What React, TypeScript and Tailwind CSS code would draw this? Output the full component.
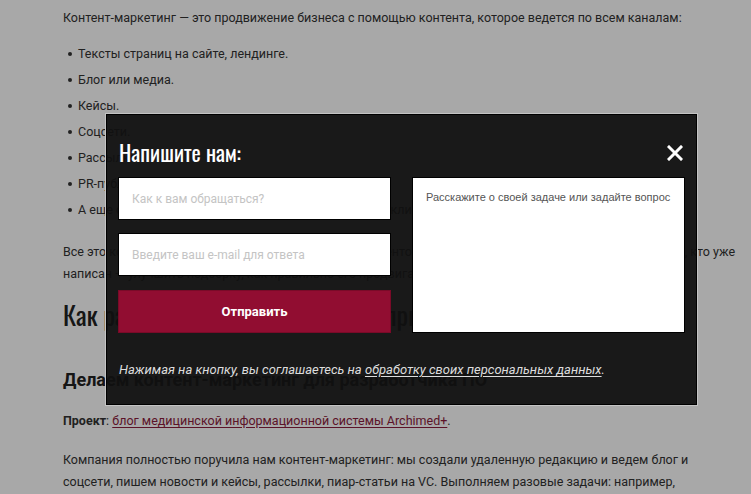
import { useState } from 'react'

const body = { fontFamily: 'Roboto, "Noto Sans", sans-serif' }
const condensed = { fontFamily: 'Oswald, "DejaVu Sans Condensed", "Liberation Sans Narrow", "Roboto Condensed", sans-serif', fontStretch: 'condensed' as const }

const items = [
  'Тексты страниц на сайте, лендинге.',
  'Блог или медиа.',
  'Кейсы.',
  'Соцсети.',
  'Рассылки.',
  'PR-публикации в СМИ.',
  'А еще сценарии видео, подкасты и презентации для клиентов и партнеры: Кейсы.',
]

function Page() {
  return (
    <div className="px-[63px] pt-[5px] text-[12.5px] text-[#333] whitespace-nowrap" style={body}>
      <p className="leading-[26px]">
        Контент-маркетинг — это продвижение бизнеса с помощью контента, которое ведется по всем каналам:
      </p>
      <ul className="mt-[10px] pl-[15px]">
        {items.map(t => (
          <li key={t} className="relative leading-[26px]">
            <span className="absolute left-[-10px] top-[11px] w-[4px] h-[4px] rounded-full bg-[#333]" />
            {t}
          </li>
        ))}
      </ul>
      <p className="mt-[18px] leading-[22px]">
        Все это контент-маркетинг. Он помогает привлечь клиентов, которые о вас еще не знают, и удержать тех, кто уже
        <br />
        написан — улучшить подборку, как правильно его продвигать.
      </p>
      <h2 className="mt-[13px] text-[26px] leading-[34px] text-[#222]" style={condensed}>
        Как работает контент-маркетинг: примеры
      </h2>
      <h3 className="mt-[35px] text-[18px] leading-[26px] font-bold text-[#222]">
        Делаем контент-маркетинг для разработчика ПО
      </h3>
      <p className="mt-[17px] leading-[22px]">
        <b>Проект</b>:{' '}
        <a className="text-[#8c1d3e] underline underline-offset-2">блог медицинской информационной системы Archimed+</a>.
      </p>
      <p className="mt-[17px] leading-[22px]">
        Компания полностью поручила нам контент-маркетинг: мы создали удаленную редакцию и ведем блог и
        <br />
        соцсети, пишем новости и кейсы, рассылки, пиар-статьи на VC. Выполняем разовые задачи: например,
      </p>
    </div>
  )
}

function Modal() {
  const [name, setName] = useState('')
  const [email, setEmail] = useState('')
  const [msg, setMsg] = useState('')

  return (
    <div className="absolute left-[105px] top-[113px] w-[593px] h-[293px] border border-[#c4c4c4]">
      <div className="h-full border border-black bg-[#101010]/[0.94] px-[11px] pt-[23px]">
        <div className="flex items-center justify-between mb-[11px] h-[28px]">
          <h2 className="pl-[1px] text-[22px] leading-[28px] text-white" style={condensed}>
            Напишите нам:
          </h2>
          <button className="mr-[2px] mt-[2px] w-[16px] h-[16px]">
            <svg viewBox="0 0 16 16" width="16" height="16">
              <path d="M2 2 L14 14 M14 2 L2 14" stroke="#fff" strokeWidth="3" strokeLinecap="square" />
            </svg>
          </button>
        </div>
        <div className="grid grid-cols-[273px_273px] gap-x-[21px]">
          <div className="flex flex-col" style={body}>
            <input
              value={name}
              onChange={e => setName(e.target.value)}
              placeholder="Как к вам обращаться?"
              className="h-[43px] border border-black bg-white px-[13px] text-[12px] text-[#333] placeholder:text-[#c4c4c4] outline-none"
            />
            <input
              value={email}
              onChange={e => setEmail(e.target.value)}
              placeholder="Введите ваш e-mail для ответа"
              className="mt-[13px] h-[43px] border border-black bg-white px-[13px] text-[12px] text-[#333] placeholder:text-[#c4c4c4] outline-none"
            />
            <button className="mt-[14px] h-[43px] border border-[#7a0a28] bg-[#910d31] text-white text-[13px] font-bold">
              Отправить
            </button>
          </div>
          <textarea
            value={msg}
            onChange={e => setMsg(e.target.value)}
            placeholder="Расскажите о своей задаче или задайте вопрос"
            className="h-[156px] resize-none border border-black bg-white px-[13px] pt-[11px] text-[11px] leading-[16px] text-[#333] placeholder:text-[#555] outline-none"
            style={{ fontFamily: '"Liberation Sans", Arial, sans-serif' }}
          />
        </div>
        <p className="mt-[27px] pl-[1px] text-[13px] italic text-[#ddd]" style={body}>
          Нажимая на кнопку, вы соглашаетесь на{' '}
          <a className="underline underline-offset-2">обработку своих персональных данных</a>.
        </p>
      </div>
    </div>
  )
}

export default function App() {
  return (
    <div className="relative w-[751px] h-[494px] overflow-hidden bg-white">
      <Page />
      <div className="absolute inset-0 bg-black/[0.34]" />
      <Modal />
    </div>
  )
}
